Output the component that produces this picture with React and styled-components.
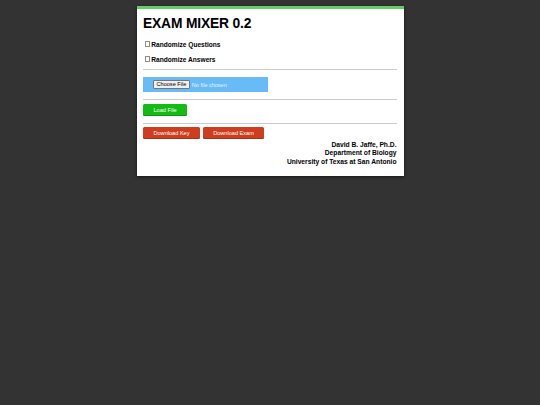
import React from "react";
import styled, { createGlobalStyle } from "styled-components";

const Global = createGlobalStyle`
  html, body { margin: 0; padding: 0; background: #333333; }
  body { font-family: "Liberation Sans", Arial, sans-serif; }
`;

const Page = styled.div`
  width: 540px;
  height: 405px;
  background: #333333;
  padding-top: 6px;
  box-sizing: border-box;
`;

const Card = styled.div`
  width: 267px;
  margin: 0 auto;
  background: #ffffff;
  border-top: 3px solid #66cc66;
  box-shadow: 0 1px 3px rgba(0, 0, 0, 0.6);
  padding: 8px 7px 9.5px 6.5px;
  box-sizing: border-box;
  color: #000;
`;

const Title = styled.h1`
  margin: 0 0 9px 0;
  font-size: 13.8px;
  font-weight: bold;
  line-height: 14px;
  height: 14px;
  letter-spacing: -0.15px;
`;

const CheckRow = styled.label`
  display: flex;
  align-items: center;
  font-size: 6.6px;
  font-weight: bold;
  height: 8px;
  margin-bottom: ${(p) => p.$mb || 0}px;
`;

const Box = styled.span`
  width: 3.8px;
  height: 3.8px;
  border: 0.6px solid #8a8a8a;
  border-radius: 0.5px;
  margin: 0 1px 0 1.5px;
  background: #fff;
`;

const Rule = styled.hr`
  border: none;
  border-top: 1px solid #cccccc;
  height: 0;
  margin: ${(p) => p.$m || "0"};
`;

const FileBox = styled.div`
  width: 125px;
  height: 15px;
  background: #67bcf7;
  display: flex;
  align-items: center;
  padding-left: 10px;
  box-sizing: border-box;
  gap: 2px;
`;

const FileButton = styled.span`
  font-size: 5.6px;
  background: #efefef;
  border: 0.6px solid #767676;
  border-radius: 1px;
  padding: 1px 2.5px;
  line-height: 5.6px;
  color: #000;
`;

const FileText = styled.span`
  font-size: 5.5px;
  color: #e3f1fc;
`;

const ButtonRow = styled.div`
  display: flex;
  gap: 3px;
  margin-top: ${(p) => p.$mt || 0}px;
`;

const Btn = styled.button`
  display: block;
  height: 12px;
  width: ${(p) => p.$w}px;
  padding: 0;
  border: none;
  border-radius: 1.5px;
  background: ${(p) => p.$bg};
  box-shadow: inset 0 -1px 0 rgba(0, 0, 0, 0.18);
  color: #fff;
  font-family: "Liberation Sans", Arial, sans-serif;
  font-size: 5.6px;
  cursor: pointer;
`;

const Credits = styled.div`
  text-align: right;
  font-size: 6.7px;
  font-weight: bold;
  line-height: 8.7px;
  margin-top: 2px;
`;

export default function App() {
  return (
    <>
      <Global />
      <Page>
        <Card>
          <Title>EXAM MIXER 0.2</Title>
          <CheckRow $mb={7}>
            <Box />
            Randomize Questions
          </CheckRow>
          <CheckRow>
            <Box />
            Randomize Answers
          </CheckRow>
          <Rule $m="6px 0 7px 0" />
          <FileBox>
            <FileButton>Choose File</FileButton>
            <FileText>No file chosen</FileText>
          </FileBox>
          <Rule $m="7px 0 0 0" />
          <ButtonRow $mt={3.5}>
            <Btn $w={44} $bg="#15bb15">Load File</Btn>
          </ButtonRow>
          <Rule $m="7px 0 0 0" />
          <ButtonRow $mt={3}>
            <Btn $w={57} $bg="#cd3d1e">Download Key</Btn>
            <Btn $w={61} $bg="#cd3d1e">Download Exam</Btn>
          </ButtonRow>
          <Credits>
            David B. Jaffe, Ph.D.
            <br />
            Department of Biology
            <br />
            University of Texas at San Antonio
          </Credits>
        </Card>
      </Page>
    </>
  );
}
